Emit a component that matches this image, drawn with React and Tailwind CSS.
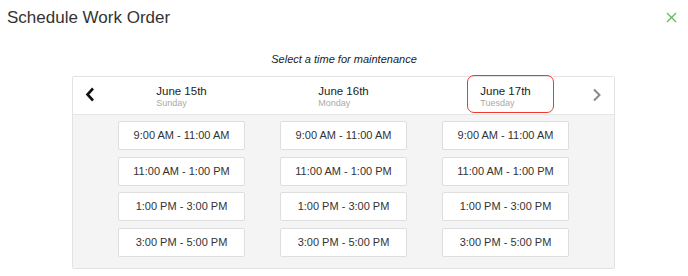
import React from "react";

const days = [
  { date: "June 15th", day: "Sunday" },
  { date: "June 16th", day: "Monday" },
  { date: "June 17th", day: "Tuesday", selected: true },
];

const slots = [
  "9:00 AM - 11:00 AM",
  "11:00 AM - 1:00 PM",
  "1:00 PM - 3:00 PM",
  "3:00 PM - 5:00 PM",
];

function App() {
  return (
    <div
      className="w-[688px] h-[276px] bg-white relative overflow-hidden text-[#333]"
      style={{ fontFamily: '"Liberation Sans", Arial, sans-serif' }}
    >
      {/* Заголовок */}
      <div className="flex items-start justify-between pl-[7px] pr-[10px] pt-[6px]">
        <h1 className="text-[17px] leading-[24px] text-[#333]">Schedule Work Order</h1>
        <button className="mt-[6px] mr-[1px]">
          <svg width="11" height="11" viewBox="0 0 11 11">
            <path d="M1 1 L10 10 M10 1 L1 10" stroke="#5cb85c" strokeWidth="1.2" fill="none" />
          </svg>
        </button>
      </div>

      <p className="text-center italic text-[11px] leading-[16px] mt-[21px] text-[#222]">
        Select a time for maintenance
      </p>

      <div className="ml-[72px] mt-[9px] w-[543px] border border-[#e3e3e3] rounded-[2px]">
        {/* Шапка с датами */}
        <div className="relative h-[38px] bg-white border-b border-[#e6e6e6] flex">
          <button className="absolute left-[12px] top-[10px]">
            <svg width="10" height="15" viewBox="0 0 10 15">
              <path d="M8 1.5 L2.5 7.5 L8 13.5" stroke="#111" strokeWidth="2.6" fill="none" />
            </svg>
          </button>
          <div className="grid grid-cols-[162px_162px_162px] mx-auto">
            {days.map((d) => (
              <div key={d.date} className="flex justify-center pt-[8px]">
                <div className="relative">
                  {d.selected && (
                    <div className="absolute -left-[13px] -top-[10px] w-[87px] h-[38px] border-[1.5px] border-[#f0382c] rounded-[7px]" />
                  )}
                  <div className="text-[11.5px] leading-[13px] text-[#222]">{d.date}</div>
                  <div className="text-[9px] leading-[11px] text-[#aaa]">{d.day}</div>
                </div>
              </div>
            ))}
          </div>
          <button className="absolute right-[12px] top-[11px]">
            <svg width="10" height="14" viewBox="0 0 10 14">
              <path d="M2 1.5 L7.5 7 L2 12.5" stroke="#8a8a8a" strokeWidth="2" fill="none" />
            </svg>
          </button>
        </div>

        {/* Слоты */}
        <div className="bg-[#f4f4f4] pt-[6px] pb-[11px]">
          <div className="grid grid-cols-[162px_162px_162px] justify-center">
            {days.map((d) => (
              <div key={d.date} className="flex flex-col items-center gap-[6.5px]">
                {slots.map((s) => (
                  <button
                    key={s}
                    className="w-[127px] h-[29px] bg-white border border-[#dedede] rounded-[2px] text-[11px] text-[#333]"
                  >
                    {s}
                  </button>
                ))}
              </div>
            ))}
          </div>
        </div>
      </div>
    </div>
  );
}

export default App;
